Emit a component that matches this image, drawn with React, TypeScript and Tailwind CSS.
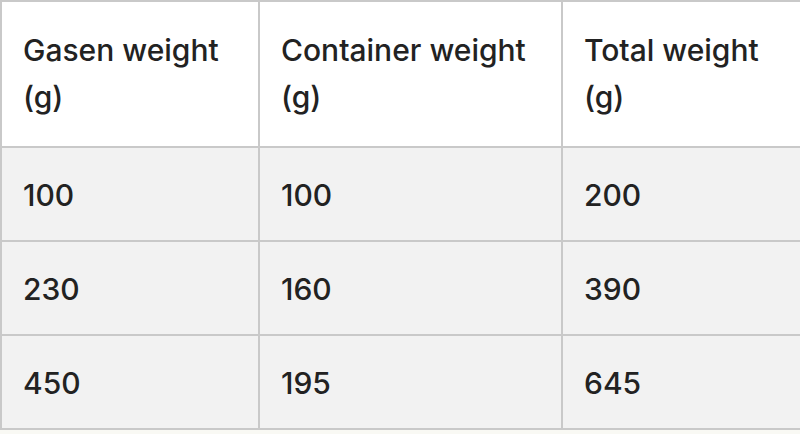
const rows = [
  ["100", "100", "200"],
  ["230", "160", "390"],
  ["450", "195", "645"],
];

export default function App() {
  return (
    <div className="w-[800px] h-[434px] overflow-hidden bg-[#f9f9f4]">
      <table
        className="border-collapse table-fixed w-[820px] text-[#222222] text-[30px] font-medium leading-[47px]"
        style={{ fontFamily: "Inter, 'Liberation Sans', sans-serif" }}
      >
        <colgroup>
          <col className="w-[258px]" />
          <col className="w-[303px]" />
          <col />
        </colgroup>
        <thead>
          <tr className="bg-white">
            <th className="border-2 border-[#c9c9c9] text-left font-medium align-top pl-[21px] pr-[20px] pt-[25px] pb-[25px]">
              Gasen weight (g)
            </th>
            <th className="border-2 border-[#c9c9c9] text-left font-medium align-top pl-[21px] pr-[20px] pt-[25px] pb-[25px]">
              Container weight (g)
            </th>
            <th className="border-2 border-[#c9c9c9] text-left font-medium align-top pl-[21px] pr-[20px] pt-[25px] pb-[25px]">
              Total weight (g)
            </th>
          </tr>
        </thead>
        <tbody>
          {rows.map((r, i) => (
            <tr key={i} className="bg-[#f2f2f2]">
              {r.map((c, j) => (
                <td
                  key={j}
                  className="border-2 border-[#c9c9c9] pl-[21px] pr-[20px] pt-[24px] pb-[21px]"
                >
                  {c}
                </td>
              ))}
            </tr>
          ))}
        </tbody>
      </table>
    </div>
  );
}
